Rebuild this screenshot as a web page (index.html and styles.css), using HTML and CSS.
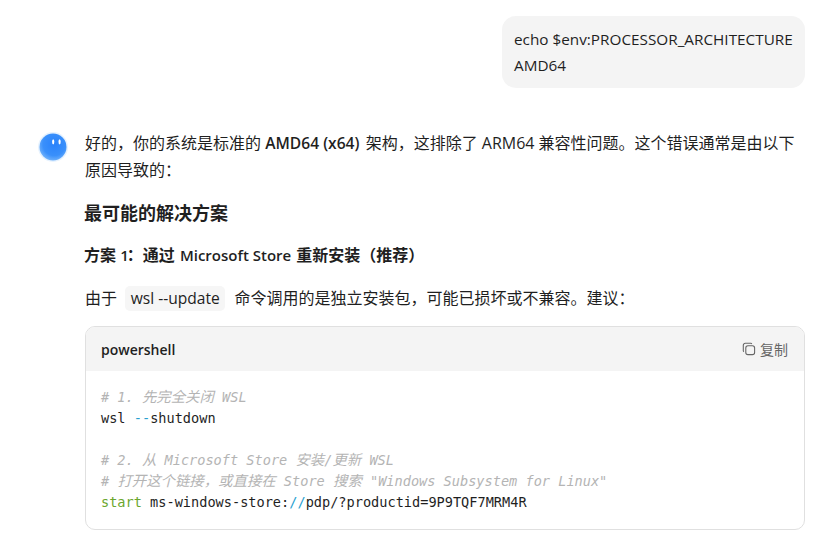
FILE: index.html
```html
<!DOCTYPE html>
<html lang="zh">
<head>
<meta charset="utf-8">
<title>Chat</title>
<link rel="stylesheet" href="styles.css">
</head>
<body>
<main class="chat">
  <div class="user-row">
    <div class="bubble">
      <div>echo $env:PROCESSOR_ARCHITECTURE</div>
      <div>AMD64</div>
    </div>
  </div>
  <div class="reply">
    <div class="avatar">
      <svg viewBox="0 0 30 30" width="30" height="30" aria-hidden="true">
        <defs>
          <radialGradient id="orb" cx="0.55" cy="0.4" r="0.65">
            <stop offset="0" stop-color="#2a82fb"/>
            <stop offset="0.65" stop-color="#3a90fb"/>
            <stop offset="1" stop-color="#7ab8fc"/>
          </radialGradient>
        </defs>
        <circle cx="15" cy="15" r="15" fill="#e6f2fe"/>
        <circle cx="15" cy="15" r="13.5" fill="url(#orb)"/>
        <ellipse cx="15.2" cy="9.8" rx="1.1" ry="2.6" fill="#fff"/>
        <ellipse cx="21.6" cy="9.8" rx="1.1" ry="2.6" fill="#fff"/>
      </svg>
    </div>
    <div class="content">
      <p class="para">好的，你的系统是标准的 <strong class="bold">AMD64 (x64)</strong> 架构，这排除了 ARM64 兼容性问题。这个错误通常是由以下原因导致的：</p>
      <h2 class="heading">最可能的解决方案</h2>
      <h3 class="subheading">方案 <span class="num">1</span>：通过 <span class="lat">Microsoft Store</span> 重新安装（推荐）</h3>
      <p class="para">由于 <code class="inline">wsl --update</code> 命令调用的是独立安装包，可能已损坏或不兼容。建议：</p>
      <section class="code">
        <header class="code-head">
          <span class="lang">powershell</span>
          <span class="copy">
            <svg viewBox="0 0 14 14" width="14" height="14" fill="none" stroke="#666" stroke-width="1.1" aria-hidden="true">
              <rect x="3.8" y="3.8" width="8.8" height="8.8" rx="2.2"/>
              <path d="M9.8 1.9 A1.2 1.2 0 0 0 8.8 1.3 H3.3 A2 2 0 0 0 1.3 3.3 V8.8 A1.2 1.2 0 0 0 1.9 9.8"/>
            </svg>
            复制
          </span>
        </header>
<pre class="code-body"><span class="cm"># 1. <span class="zh">先完全关闭</span> WSL</span>
wsl <span class="op">--</span>shutdown

<span class="cm"># 2. <span class="zh">从</span> Microsoft Store <span class="zh">安装</span>/<span class="zh">更新</span> WSL</span>
<span class="cm"># <span class="zh">打开这个链接，或直接在</span> Store <span class="zh">搜索</span> "Windows Subsystem for Linux"</span>
<span class="kw">start</span> ms-windows-store:<span class="op">//</span>pdp/?productid=9P9TQF7MRM4R</pre>
      </section>
    </div>
  </div>
</main>
</body>
</html>
```

FILE: styles.css
```css
* { box-sizing: border-box; }
html, body { margin: 0; height: 540px; overflow: hidden; background: #fff; }
body {
  font-family: "Open Sans", "Noto Sans CJK SC", sans-serif;
  font-size: 16px;
  color: #1f1f1f;
}
.chat { display: flex; flex-direction: column; width: 805px; padding-top: 16px; }
.user-row { display: flex; justify-content: flex-end; }
.bubble {
  width: 303px;
  padding: 10px 12px;
  background: #f4f4f4;
  border-radius: 14px;
  font-size: 15.3px;
  line-height: 26px;
  white-space: nowrap;
}
.reply { display: flex; margin-top: 42px; }
.avatar { flex: none; width: 30px; height: 30px; margin: 2px 17px 0 38px; }
.avatar svg { display: block; }
.content { flex: 1; min-width: 0; }
.lat { font-size: 15px; margin: 0 1px; }
.num { font-size: 15px; letter-spacing: -2px; }
.para { margin: 0 0 14px; line-height: 27px; }
.bold { font-weight: 600; font-size: 15.6px; margin-right: 2px; }
.heading { margin: 15px 0 0 -1px; font-size: 18px; line-height: 28px; font-weight: 600; }
.subheading { margin: 14px 0 0 -1px; font-size: 16px; line-height: 28px; font-weight: 600; }
.subheading + .para { margin-top: 16px; }
.inline {
  font-family: inherit;
  font-size: 15.6px;
  display: inline-block;
  line-height: 25px;
  margin: 0 5px 0 4px;
  padding: 0 5.5px;
  background: #f6f6f6;
  border-radius: 5px;
}
.code { border: 1px solid #e0e0e0; border-radius: 10px; overflow: hidden; height: 204px; margin-top: 14px; }
.code-head {
  display: flex;
  justify-content: space-between;
  align-items: center;
  height: 44px;
  padding: 0 16px 0 15px;
  background: #f4f4f4;
  font-size: 14px;
}
.lang { font-weight: 600; }
.copy { display: flex; align-items: center; gap: 4px; color: #666; }
.code-body {
  margin: 0;
  padding: 16px 15px;
  font-family: "DejaVu Sans Mono", "Noto Sans CJK SC", monospace;
  font-size: 13.6px;
  line-height: 21px;
  color: #1f1f1f;
}
.zh { font-size: 14.4px; }
.cm { color: #b4b4b4; font-style: italic; }
.kw { color: #6aa62e; }
.op { color: #2a9fd0; }
```
